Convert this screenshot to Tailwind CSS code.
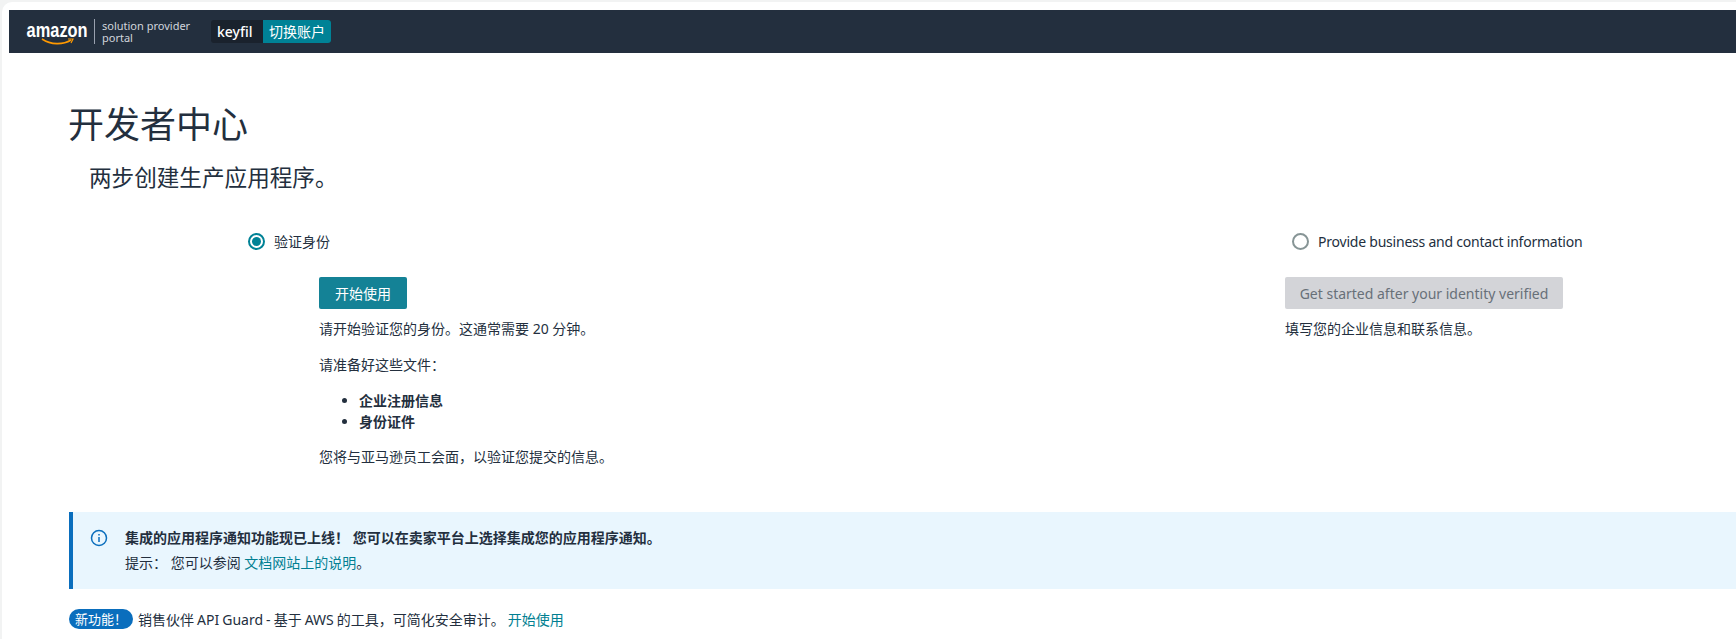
<!DOCTYPE html>
<html>
<head>
<meta charset="utf-8">
<title>开发者中心</title>
<script src="https://cdn.jsdelivr.net/npm/@tailwindcss/browser@4"></script>
</head>
<body class="bg-[#f2f3f3] h-[639px] overflow-hidden font-['Noto_Sans','Noto_Sans_CJK_SC',sans-serif] text-[14px] text-[#232f3e]">
<div class="ml-[2px] mt-[2px] h-[637px] bg-white rounded-tl-[10px] pt-[8px] pl-[7px] overflow-hidden">
    <header class="h-[43px] bg-[#232f3e] flex items-center pl-[18px]">
        <div class="w-[60px] flex flex-col items-center text-white pt-[3px]">
            <span class="font-['Liberation_Sans',sans-serif] font-bold text-[21px] leading-[17px] scale-x-[0.78] whitespace-nowrap">amazon</span>
            <svg class="w-[33px] h-[7px]" viewBox="0 0 33 7" fill="none"><path d="M1 1c9 6 21 6 29 1" stroke="#ff9900" stroke-width="1.6"/><path d="M27 1l5 0-2 4" stroke="#ff9900" stroke-width="1.2"/></svg>
        </div>
        <div class="w-px h-[25px] bg-gray-400 ml-[7px]"></div>
        <div class="ml-[7px] text-[11px] leading-[12px] text-gray-300 w-[100px]">solution provider<br>portal</div>
        <div class="ml-[9px] flex h-[23px] rounded-[3px] overflow-hidden bg-[#1a222d] text-white text-[14px] leading-[23px]">
            <span class="w-[52px] pl-[6px] font-medium">keyfil</span>
            <span class="w-[68px] bg-[#008296] text-center">切换账户</span>
        </div>
    </header>
    <main class="pl-[59px]">
        <h1 class="mt-[47px] text-[36px] leading-[50px] font-normal">开发者中心</h1>
        <h2 class="mt-[12px] ml-[21px] text-[22.6px] leading-[32px] font-normal">两步创建生产应用程序。</h2>
        <section class="mt-[36px] flex">
            <div class="ml-[180px] w-[1037px] shrink-0">
                <div class="flex items-center h-[22px]">
                    <span class="w-[17px] h-[17px] shrink-0 rounded-full border-2 border-[#008296] flex items-center justify-center"><span class="w-[9px] h-[9px] rounded-full bg-[#008296]"></span></span>
                    <span class="ml-[9px]">验证身份</span>
                </div>
                <div class="ml-[71px]">
                    <button class="mt-[25px] w-[88px] h-[32px] rounded-[2px] bg-[#148296] text-white">开始使用</button>
                    <p class="mt-[9px] leading-[21px]">请开始验证您的身份。这通常需要 20 分钟。</p>
                    <p class="mt-[15px] leading-[21px]">请准备好这些文件：</p>
                    <ul class="mt-[15px] ml-[40px] list-disc font-bold leading-[21px]">
                        <li>企业注册信息</li>
                        <li>身份证件</li>
                    </ul>
                    <p class="mt-[14px] leading-[21px]">您将与亚马逊员工会面，以验证您提交的信息。</p>
                </div>
            </div>
            <div class="w-[300px] shrink-0">
                <div class="flex items-center h-[22px] ml-[7px] whitespace-nowrap">
                    <span class="w-[17px] h-[17px] shrink-0 rounded-full border-2 border-[#879596]"></span>
                    <span class="ml-[9px] tracking-[-0.22px]">Provide business and contact information</span>
                </div>
                <button class="mt-[25px] w-[278px] h-[32px] rounded-[2px] bg-[#d3d4d8] text-[#687078]">Get started after your identity verified</button>
                <p class="mt-[9px] leading-[21px]">填写您的企业信息和联系信息。</p>
            </div>
        </section>
        <div class="mt-[45px] ml-px h-[77px] bg-[#e9f6fe] border-l-4 border-[#0a6ebd] flex pl-[17px] pt-[15px]">
            <svg class="w-[18px] h-[18px] mt-[2px] shrink-0" viewBox="0 0 18 18" fill="none" stroke="#0a6ebd" stroke-width="1.5"><circle cx="9" cy="9" r="7.5"/><path d="M9 8v5M9 5v1.6"/></svg>
            <div class="ml-[17px]">
                <p class="font-bold leading-[22px]">集成的应用程序通知功能现已上线！ 您可以在卖家平台上选择集成您的应用程序通知。</p>
                <p class="mt-[3px] leading-[22px]">提示： 您可以参阅 <a class="text-[#017f92]">文档网站上的说明</a>。</p>
            </div>
        </div>
        <p class="mt-[19px] ml-px flex items-center h-[22px]">
            <span class="w-[64px] h-[20px] rounded-full bg-[#0a6ebd] text-white text-center text-[13px] leading-[20px] shrink-0">新功能！</span>
            <span class="ml-[5px] [word-spacing:-0.6px]">销售伙伴 API Guard - 基于 AWS 的工具，可简化安全审计。 <a class="text-[#017f92]">开始使用</a></span>
        </p>
    </main>
</div>
</body>
</html>
